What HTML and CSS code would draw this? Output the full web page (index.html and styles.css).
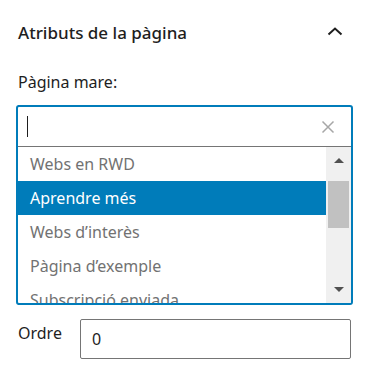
FILE: index.html
```html
<!DOCTYPE html>
<html lang="ca">
<head>
    <meta charset="UTF-8">
    <meta name="viewport" content="width=device-width, initial-scale=1.0">
    <title>Atributs de la pàgina</title>
    <link rel="stylesheet" href="styles.css">
</head>
<body>

<div class="panel">
    <div class="panel-header">
        <h2 class="panel-title">Atributs de la pàgina</h2>
        <svg class="chevron" width="16" height="10" viewBox="0 0 16 10">
            <path d="M1.5 8.5 L8 2.5 L14.5 8.5" fill="none" stroke="#1e1e1e" stroke-width="2"/>
        </svg>
    </div>

    <label class="field-label">Pàgina mare:</label>
    <div class="combo">
        <div class="combo-input">
            <span class="caret"></span>
            <svg class="clear" width="14" height="14" viewBox="0 0 14 14">
                <path d="M1.5 1.5 L12.5 12.5 M12.5 1.5 L1.5 12.5" stroke="#a7a7a7" stroke-width="1.5"/>
            </svg>
        </div>
        <div class="combo-list">
            <ul class="options">
                <li>Webs en RWD</li>
                <li class="selected">Aprendre més</li>
                <li>Webs d’interès</li>
                <li>Pàgina d’exemple</li>
                <li>Subscripció enviada</li>
            </ul>
            <div class="scrollbar">
                <div class="scroll-btn"><span class="arrow-up"></span></div>
                <div class="scroll-track">
                    <div class="scroll-thumb"></div>
                </div>
                <div class="scroll-btn"><span class="arrow-down"></span></div>
            </div>
        </div>
    </div>

    <div class="order-row">
        <label class="order-label">Ordre</label>
        <input class="order-input" type="text" value="0">
    </div>
</div>

</body>
</html>
```

FILE: styles.css
```css
body {
    margin: 0;
    background: #fff;
    font-family: "Noto Sans", "Open Sans", sans-serif;
    color: #1e1e1e;
}
.panel {
    padding: 0 16px 0 16px;
}
.panel-header {
    display: flex;
    align-items: center;
    justify-content: space-between;
    height: 64px;
    padding: 0 10px 0 2px;
}
.panel-title {
    margin: 0;
    font-size: 17px;
    font-weight: 500;
    color: #1e1e1e;
}
.chevron {
    display: block;
    margin-top: -2px;
}
.field-label {
    display: block;
    padding-left: 2px;
    font-size: 16px;
    line-height: 36px;
    height: 41px;
}
/* combobox with open list */
.combo {
    border: 2px solid #007cba;
    border-radius: 3px;
    height: 196px;
    overflow: hidden;
    display: flex;
    flex-direction: column;
}
.combo-input {
    display: flex;
    align-items: center;
    justify-content: space-between;
    height: 39px;
    padding: 0 16px 0 9px;
    border-bottom: 1px solid #757575;
    flex-shrink: 0;
}
.caret {
    display: block;
    width: 0;
    height: 21px;
    border-left: 1px solid #1e1e1e;
}
.clear {
    display: block;
}
.combo-list {
    display: flex;
    flex: 1;
    min-height: 0;
}
.options {
    list-style: none;
    margin: 0;
    padding: 0;
    flex: 1;
    overflow: hidden;
}
.options li {
    height: 34px;
    line-height: 34px;
    padding-left: 12px;
    font-size: 16px;
    color: #727272;
    white-space: nowrap;
}
.options li.selected {
    background: #007cba;
    color: #fff;
}
.scrollbar {
    width: 25px;
    background: #f0f0f0;
    display: flex;
    flex-direction: column;
}
.scroll-btn {
    height: 27px;
    display: flex;
    align-items: center;
    justify-content: center;
}
.arrow-up,
.arrow-down {
    width: 0;
    height: 0;
    border-left: 5px solid transparent;
    border-right: 5px solid transparent;
}
.arrow-up {
    border-bottom: 5px solid #505050;
}
.arrow-down {
    border-top: 5px solid #505050;
}
.scroll-track {
    flex: 1;
    padding: 7px 2px 0 2px;
}
.scroll-thumb {
    height: 47px;
    background: #c1c1c1;
}
/* order field */
.order-row {
    display: flex;
    align-items: flex-start;
    margin-top: 14px;
    padding-left: 2px;
}
.order-label {
    font-size: 16px;
    line-height: 28px;
    width: 62px;
}
.order-input {
    box-sizing: border-box;
    width: 271px;
    height: 40px;
    border: 1px solid #757575;
    border-radius: 2px;
    padding: 0 11px;
    font-family: inherit;
    font-size: 16px;
    color: #1e1e1e;
}
```
